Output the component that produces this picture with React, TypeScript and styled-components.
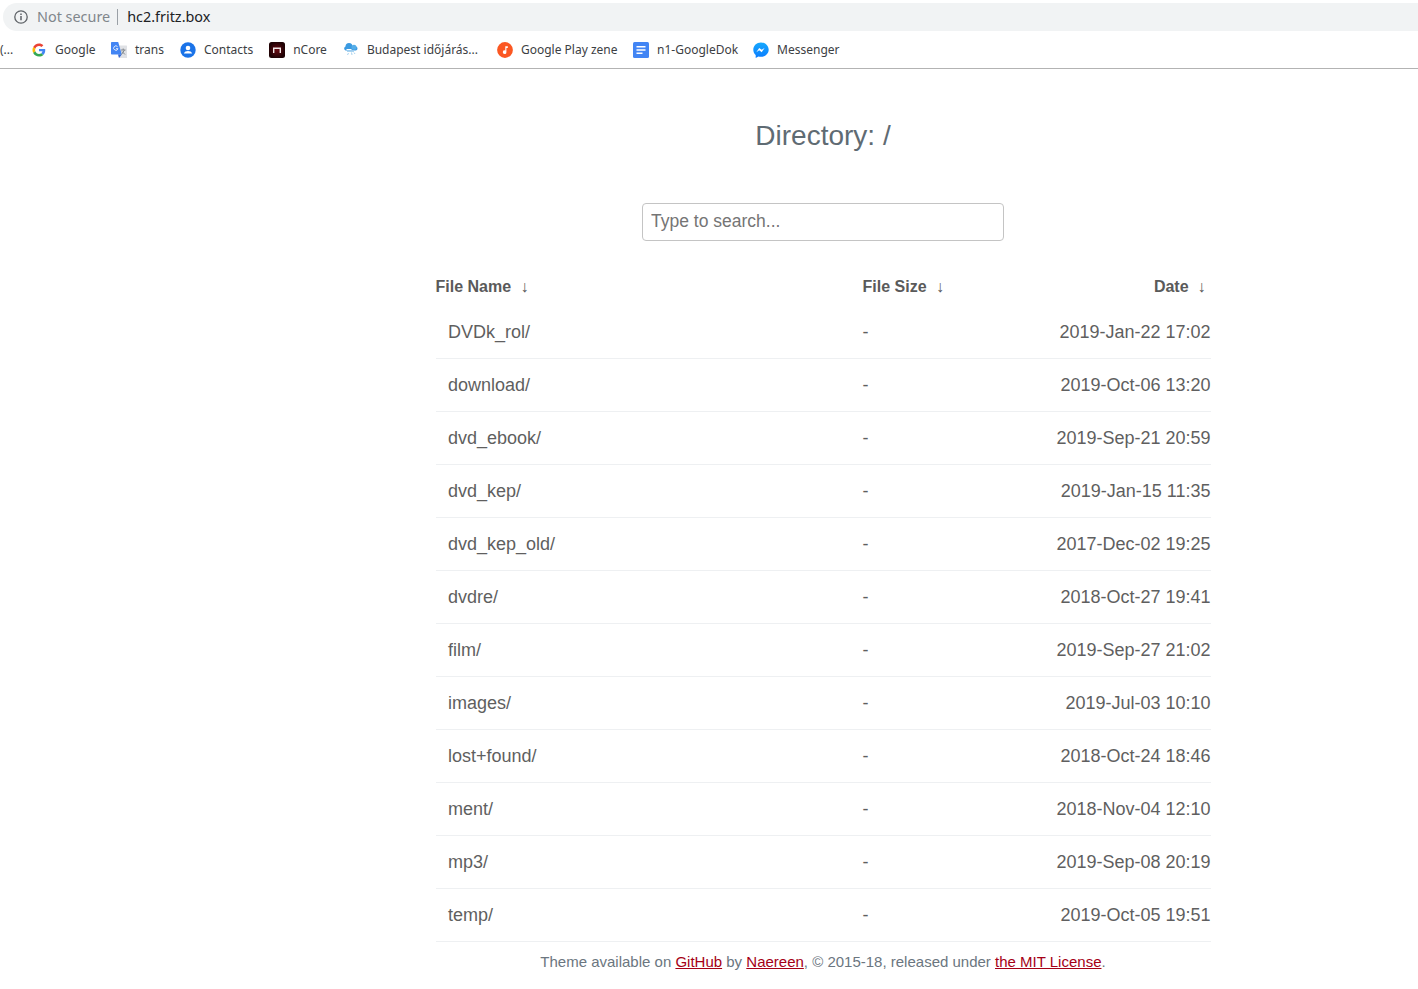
import styled, { createGlobalStyle } from 'styled-components';

const GlobalStyle = createGlobalStyle`
  html, body {
    margin: 0;
    padding: 0;
    background: #fff;
    overflow: hidden;
  }
`;

const GoogleIcon = () => (
  <svg width="16" height="16" viewBox="-5.5 -5.5 59 59">
    <path fill="#EA4335" d="M24 9.500c3.500 0 6.700 1.200 9.200 3.600l6.900-6.900C35.900 2.400 30.500 0 24 0 14.600 0 6.500 5.400 2.600 13.200l8 6.200C12.400 13.700 17.700 9.500 24 9.500z" />
    <path fill="#4285F4" d="M47 24.500c0-1.600-.1-3.100-.4-4.500H24v9h12.900c-.6 3-2.200 5.500-4.700 7.200l7.700 6C44.400 38.100 47 31.900 47 24.500z" />
    <path fill="#FBBC05" d="M10.600 28.600c-.5-1.400-.8-3-.8-4.600s.3-3.200.8-4.600l-8-6.200C.9 16.500 0 20.100 0 24s.9 7.500 2.600 10.800l8-6.200z" />
    <path fill="#34A853" d="M24 48c6.500 0 11.900-2.100 15.900-5.800l-7.700-6c-2.200 1.500-5 2.300-8.200 2.300-6.300 0-11.600-4.200-13.400-9.900l-8 6.200C6.500 42.600 14.600 48 24 48z" />
  </svg>
);

const TranslateIcon = () => (
  <svg width="16" height="16" viewBox="0 0 16 16">
    <path fill="#dfe1e5" d="M6 3.500h9.500a.5.500 0 0 1 .5.500v11.500a.5.500 0 0 1-.5.500H8z" />
    <path fill="#4285f4" d="M.8 0h6.400l3.600 12.500H.8a.8.800 0 0 1-.8-.8V.8A.8.800 0 0 1 .8 0z" />
    <path fill="#3367d6" d="M7 12.500h3.800L8 16z" />
    <path fill="none" stroke="#e3ecfb" strokeWidth="1" d="M6.600 4.700a2.200 2.200 0 1 0 .4 2H5" />
    <path stroke="#80868b" strokeWidth="1" d="M10 8h4.500M12.200 6.500V8M10.500 12.500l3-4.500M11 9.500l3 3" fill="none" />
  </svg>
);

const ContactsIcon = () => (
  <svg width="16" height="16" viewBox="0 0 16 16">
    <circle cx="8" cy="8" r="7.700" fill="#1a73e8" />
    <circle cx="8" cy="6" r="2.300" fill="#fff" />
    <path fill="#fff" d="M3.800 11.500c.5-1.700 2.500-2.500 4.200-2.500s3.700.8 4.200 2.500z" />
  </svg>
);

const NcoreIcon = () => (
  <svg width="16" height="16" viewBox="0 0 16 16">
    <defs>
      <radialGradient id="ncoreBg">
        <stop offset="0%" stopColor="#6b0a12" />
        <stop offset="100%" stopColor="#1f0204" />
      </radialGradient>
    </defs>
    <rect width="16" height="16" rx="2.500" fill="url(#ncoreBg)" />
    <path fill="none" stroke="#efe6e6" strokeWidth="1.400" d="M4.700 11V6.200h6.600V11" />
  </svg>
);

const WeatherIcon = () => (
  <svg width="16" height="16" viewBox="0 0 16 16">
    <circle cx="6" cy="4.500" r="3.500" fill="#3b9ae1" />
    <path fill="#3b9ae1" d="M2.500 8.500a2 2 0 0 1 .5-3.900h9a2 2 0 0 1 2.500 1.900 2 2 0 0 1-1.500 2z" />
    <circle cx="11" cy="5.200" r="2.500" fill="#55ade8" />
    <path stroke="#fff" strokeWidth="1" d="M3.500 7.500h5" fill="none" />
    <path stroke="#a9d3ef" strokeWidth="1" d="M4 9.500h7M5.500 11l-1 2M8.500 10.500l.5 2.500M11 10.500l1 1.500" fill="none" />
  </svg>
);

const PlayIcon = () => (
  <svg width="16" height="16" viewBox="0 0 16 16">
    <circle cx="8" cy="8" r="7.900" fill="#fb5722" />
    <path fill="#fff" d="M8.300 4.300h2.500v1.700H9.400v4.200a1.800 1.800 0 1 1-1.100-1.600z" />
  </svg>
);

const DocsIcon = () => (
  <svg width="16" height="16" viewBox="0 0 16 16">
    <rect width="16" height="16" rx="1.500" fill="#4285f4" />
    <path fill="#fff" d="M3.500 4h9v1.600h-9zM3.500 7.200h9v1.600h-9zM3.500 10.400h6v1.600h-6z" />
  </svg>
);

const MessengerIcon = () => (
  <svg width="16" height="16" viewBox="0 0 16 16">
    <defs>
      <linearGradient id="messengerBg" x1="0" y1="1" x2="0" y2="0">
        <stop offset="0%" stopColor="#0a7cff" />
        <stop offset="100%" stopColor="#17a9fd" />
      </linearGradient>
    </defs>
    <path fill="url(#messengerBg)" d="M8 .5C3.600.5.300 3.700.300 7.800c0 2.200.9 4 2.400 5.300V16l2.700-1.500c.8.200 1.700.3 2.600.3 4.400 0 7.700-3.200 7.700-7S12.400.5 8 .5z" />
    <path fill="#fff" d="M3.300 10.200l2.900-4.300 2.500 1.900 2.900-1.900-2.900 4.300-2.500-1.900z" />
  </svg>
);

const bookmarks = [
  { label: 'Google', icon: <GoogleIcon />, gap: 15.500 },
  { label: 'trans', icon: <TranslateIcon />, gap: 16 },
  { label: 'Contacts', icon: <ContactsIcon />, gap: 16 },
  { label: 'nCore', icon: <NcoreIcon />, gap: 16 },
  { label: 'Budapest időjárás...', icon: <WeatherIcon />, gap: 19 },
  { label: 'Google Play zene', icon: <PlayIcon />, gap: 15.500 },
  { label: 'n1-GoogleDok', icon: <DocsIcon />, gap: 15 },
  { label: 'Messenger', icon: <MessengerIcon />, gap: 0 },
];

const files = [
  ['DVDk_rol/', '2019-Jan-22 17:02'],
  ['download/', '2019-Oct-06 13:20'],
  ['dvd_ebook/', '2019-Sep-21 20:59'],
  ['dvd_kep/', '2019-Jan-15 11:35'],
  ['dvd_kep_old/', '2017-Dec-02 19:25'],
  ['dvdre/', '2018-Oct-27 19:41'],
  ['film/', '2019-Sep-27 21:02'],
  ['images/', '2019-Jul-03 10:10'],
  ['lost+found/', '2018-Oct-24 18:46'],
  ['ment/', '2018-Nov-04 12:10'],
  ['mp3/', '2019-Sep-08 20:19'],
  ['temp/', '2019-Oct-05 19:51'],
];

const App = (): JSX.Element => (
  <Page>
    <GlobalStyle />
    <BrowserBar>
      <Omnibox>
        <svg width="16" height="16" viewBox="0 0 16 16">
          <circle cx="8" cy="8" r="6.200" fill="none" stroke="#5f6368" strokeWidth="1.300" />
          <path stroke="#5f6368" strokeWidth="1.500" d="M8 7v4.200M8 4.500V6" />
        </svg>
        <NotSecure>Not secure</NotSecure>
        <Divider />
        <Url>hc2.fritz.box</Url>
      </Omnibox>
      <Bookmarks>
        <CutOff>(...</CutOff>
        {bookmarks.map(b => (
          <Bookmark key={b.label} $gap={b.gap}>
            {b.icon}
            <span>{b.label}</span>
          </Bookmark>
        ))}
      </Bookmarks>
    </BrowserBar>
    <Main>
      <Title>Directory: /</Title>
      <SearchRow>
        <SearchInput placeholder="Type to search..." />
      </SearchRow>
      <Listing>
        <thead>
          <tr>
            <NameHead>File Name <Arrow>↓</Arrow></NameHead>
            <SizeHead>File Size <Arrow>↓</Arrow></SizeHead>
            <DateHead>Date <Arrow $tight>↓</Arrow></DateHead>
          </tr>
        </thead>
        <tbody>
          {files.map(([name, date]) => (
            <tr key={name}>
              <NameCell>{name}</NameCell>
              <SizeCell>-</SizeCell>
              <DateCell>{date}</DateCell>
            </tr>
          ))}
        </tbody>
      </Listing>
      <Footer>
        Theme available on <FootLink href="#">GitHub</FootLink> by <FootLink href="#">Naereen</FootLink>, © 2015-18, released under <FootLink href="#">the MIT License</FootLink>.
      </Footer>
    </Main>
  </Page>
);

export default App;

const Page = styled.div`
  height: 989px;
  overflow: hidden;
  background: #fff;
`;

const BrowserBar = styled.header`
  height: 69px;
  box-sizing: border-box;
  padding: 3px 0 0 3px;
  border-bottom: 1px solid #b3b3b3;
  font-family: "Noto Sans", sans-serif;
`;

const Omnibox = styled.div`
  display: flex;
  align-items: center;
  height: 28px;
  padding-left: 10px;
  background: #f1f3f4;
  border-radius: 14px 0 0 14px;
  font-size: 14.400px;
  line-height: 26px;
  padding-bottom: 1px;
  box-sizing: border-box;
`;

const NotSecure = styled.span`
  margin-left: 8px;
  color: #80868b;
`;

const Divider = styled.span`
  width: 1px;
  height: 16px;
  margin: 0 9px 0 7px;
  background: #9aa0a6;
`;

const Url = styled.span`
  color: #202124;
`;

const Bookmarks = styled.nav`
  display: flex;
  align-items: center;
  height: 37px;
  margin-left: -3px;
  font-size: 12px;
  color: #3c4043;
  white-space: nowrap;
`;

const CutOff = styled.span`
  width: 31px;
  flex: none;
`;

const Bookmark = styled.div<{ $gap: number }>`
  display: flex;
  align-items: center;
  gap: 8px;
  margin-right: ${p => p.$gap}px;
  svg {
    flex: none;
  }
`;

const Main = styled.main`
  width: 775px;
  margin-left: 435.500px;
  font-family: "Liberation Sans", Arial, sans-serif;
  color: #5f5f5f;
`;

const Title = styled.h1`
  margin: 50px 0 0;
  font-size: 28px;
  font-weight: 400;
  line-height: 34px;
  text-align: center;
  color: #5f6b73;
`;

const SearchRow = styled.div`
  display: flex;
  justify-content: center;
  margin-top: 50px;
`;

const SearchInput = styled.input`
  box-sizing: border-box;
  width: 362px;
  height: 38px;
  padding: 0 8px 2px;
  border: 1px solid #c4c4c4;
  border-radius: 4px;
  outline: none;
  font-family: inherit;
  font-size: 17.500px;
  color: #555;
  &::placeholder {
    color: #757575;
    opacity: 1;
  }
`;

const Listing = styled.table`
  width: 775px;
  margin-top: 25px;
  border-collapse: collapse;
  table-layout: fixed;
`;

const HeadCell = styled.th`
  height: 38px;
  padding: 2px 0 0;
  font-size: 16px;
  font-weight: 700;
  color: #5a5a5a;
  text-align: left;
  white-space: pre;
`;

const NameHead = styled(HeadCell)`
  width: 427px;
`;

const SizeHead = styled(HeadCell)`
  width: 180px;
`;

const DateHead = styled(HeadCell)`
  padding-right: 5px;
  text-align: right;
`;

const Arrow = styled.span<{ $tight?: boolean }>`
  margin-left: ${p => (p.$tight ? 4.5 : 5)}px;
  font-weight: 400;
  font-size: 16px;
`;

const BodyCell = styled.td`
  height: 52px;
  padding: 0;
  border-bottom: 1px solid #eef0f2;
  font-size: 18px;
  color: #5f5f5f;
`;

const NameCell = styled(BodyCell)`
  padding-left: 12.500px;
`;

const SizeCell = styled(BodyCell)``;

const DateCell = styled(BodyCell)`
  text-align: right;
`;

const Footer = styled.footer`
  margin-top: 11px;
  font-size: 15px;
  line-height: 18px;
  text-align: center;
  color: #6b7680;
  white-space: nowrap;
`;

const FootLink = styled.a`
  color: #a50016;
  text-decoration: underline;
`;
